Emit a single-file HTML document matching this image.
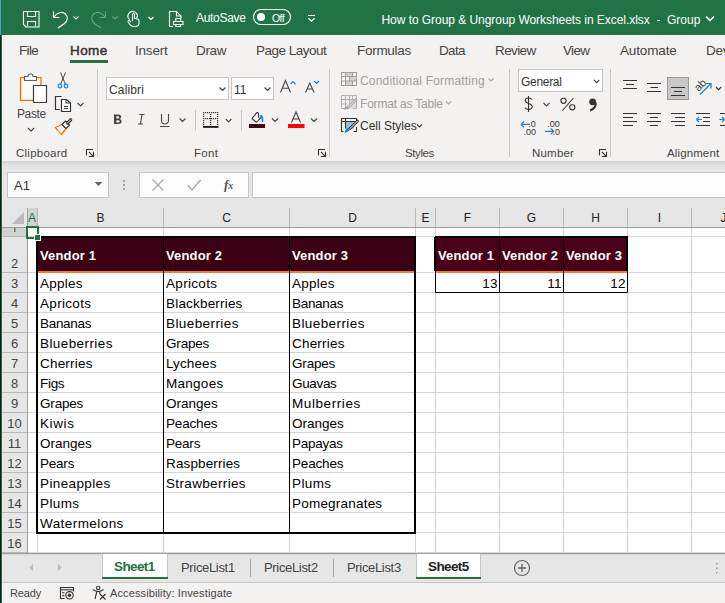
<!DOCTYPE html>
<html><head><meta charset="utf-8">
<style>
*{margin:0;padding:0;box-sizing:border-box}
html,body{width:725px;height:603px;overflow:hidden;background:#fff;font-family:"Liberation Sans",sans-serif}
.a{position:absolute}
.t{position:absolute;white-space:nowrap;line-height:1}
#title{left:0;top:0;width:725px;height:35px;background:#217346}
#tabs{left:0;top:35px;width:725px;height:31px;background:#f3f2f1}
#ribbon{left:0;top:66px;width:725px;height:95px;background:#f3f2f1}
#fbar{left:0;top:161px;width:725px;height:47px;background:#e6e6e6}
#grid{left:0;top:208px;width:725px;height:346px;background:#fff}
#sheets{left:0;top:554px;width:725px;height:29px;background:#e6e6e6}
#status{left:0;top:583px;width:725px;height:20px;background:#f3f2f1}
.tab{font-size:13.5px;color:#444;top:43.5px}
.sep{position:absolute;width:1px;background:#c8c6c4}
.glabel{font-size:11.5px;color:#444;top:147.5px}
</style></head><body>
<div id="title" class="a"></div>
<div id="tabs" class="a"></div>
<div id="ribbon" class="a"></div>
<div id="fbar" class="a"></div>
<div id="grid" class="a"></div>
<div id="sheets" class="a"></div>
<div id="status" class="a"></div>
<!-- left window border -->


<!-- TITLE BAR -->
<svg class="a" style="left:0;top:0" width="725" height="35" viewBox="0 0 725 35">
 <g fill="none" stroke="#fff" stroke-width="1.1">
  <!-- save -->
  <path d="M23.5 11.5h15.5v15.5h-13l-2.5-2.5z"/>
  <path d="M27.5 11.5v5h8v-5"/>
  <path d="M27.5 26.5v-5h8v5"/>
  <!-- undo -->
  <path d="M53.5 11.5v6h6"/>
  <path d="M54 17C56.5 12.5 62 11 65.5 14C68.5 17 67.5 21 64.5 23.5L58 28"/>
  <path d="M73.5 16.5l2.5 2.5 2.5-2.5"/>
  <!-- touch -->
  <path d="M129.5 19.5A4.6 4.6 0 1 1 136.8 18"/>
  <path d="M132.5 21v-6.5a1 1 0 0 1 2 0V19 M134.5 18.5h1.5a1 1 0 0 1 1 1 M137 19.5a1.2 1.2 0 0 1 2 .8v2.7c0 2.2-1.6 3.5-3.6 3.5h-2.2c-1.4 0-2.3-.7-3.2-1.8l-1.8-2.7a1 1 0 0 1 1.6-1.2l1.2 1.2"/>
  <path d="M148.5 17l2.5 2.5 2.5-2.5"/>
  <!-- print preview -->
  <path d="M173 26.5h-3.5v-15h7l4.5 4.5v2.5"/>
  <path d="M176.5 11.5v4.5h4.5"/>
  <path d="M175.8 21v-2.5h4.8V21 M173.5 21.5h9.5v3h-9.5z M175.8 24.5v2h4.8v-2"/>
  <!-- toggle -->
  <rect x="253.5" y="9.5" width="37" height="15" rx="7.5"/>
  <path d="M308 15.5h7 M308.3 18.2l3.2 3 3.2-3" stroke-width="1.2"/>
  <path d="M706 16.5l4 4 4-4" stroke-width="1.6"/>
 </g>
 <g fill="none" stroke="#6aa384" stroke-width="1.1">
  <g transform="translate(159,0) scale(-1,1)"><path d="M53.5 11.5v6h6"/>
  <path d="M54 17C56.5 12.5 62 11 65.5 14C68.5 17 67.5 21 64.5 23.5L58 28"/></g>
  <path d="M112.5 16.5l2.5 2.5 2.5-2.5"/>
 </g>
 <circle cx="261" cy="17" r="4" fill="#fff"/>
</svg>
<div class="t" style="left:196px;top:12px;font-size:12px;color:#fff;letter-spacing:-0.3px">AutoSave</div>
<div class="t" style="left:272px;top:13px;font-size:10.5px;color:#fff;letter-spacing:-0.6px">Off</div>
<div class="t" style="left:381.5px;top:14px;font-size:12px;color:#fff;letter-spacing:-0.05px">How to Group &amp; Ungroup Worksheets in Excel.xlsx</div>
<div class="a" style="left:657px;top:20px;width:3px;height:1px;background:#fff"></div>
<div class="t" style="left:667px;top:14px;font-size:12px;color:#fff">Group</div>
<!-- TABS -->
<div class="t tab" style="left:19px;letter-spacing:-0.67px">File</div>
<div class="t tab" style="left:70px;letter-spacing:0.4px;color:#323130;-webkit-text-stroke:0.45px #323130">Home</div>
<div class="a" style="left:70px;top:60px;width:38px;height:3px;background:#217346"></div>
<div class="t tab" style="left:135px;letter-spacing:-0.2px">Insert</div>
<div class="t tab" style="left:196px;letter-spacing:-0.33px">Draw</div>
<div class="t tab" style="left:256px;letter-spacing:-0.5px">Page Layout</div>
<div class="t tab" style="left:357px;letter-spacing:-0.29px">Formulas</div>
<div class="t tab" style="left:439px;letter-spacing:-0.67px">Data</div>
<div class="t tab" style="left:495px;letter-spacing:-0.6px">Review</div>
<div class="t tab" style="left:563px;letter-spacing:-0.67px">View</div>
<div class="t tab" style="left:620px;letter-spacing:-0.14px">Automate</div>
<div class="t tab" style="left:706px;letter-spacing:-0.3px">Developer</div>

<!-- RIBBON group separators & labels -->
<div class="sep" style="left:97px;top:69px;height:88px"></div>
<div class="sep" style="left:329px;top:69px;height:88px"></div>
<div class="sep" style="left:509px;top:69px;height:88px"></div>
<div class="sep" style="left:610px;top:69px;height:88px"></div>
<div class="t glabel" style="left:16px;letter-spacing:0.25px">Clipboard</div>
<div class="t glabel" style="left:194px;letter-spacing:0.33px">Font</div>
<div class="t glabel" style="left:405px;letter-spacing:-0.4px">Styles</div>
<div class="t glabel" style="left:532px;letter-spacing:0.2px">Number</div>
<div class="t glabel" style="left:667px;letter-spacing:0.12px">Alignment</div>
<div class="a" style="left:0;top:161px;width:725px;height:1px;background:#d2d0ce"></div>

<!-- CLIPBOARD -->
<svg class="a" style="left:0;top:66px" width="97" height="95" viewBox="0 66 97 95">
 <path d="M20.5 77.5h20.5v23h-20.5z" fill="#fde7b8" stroke="#d67410" stroke-width="1.2"/>
 <path d="M22.5 79.5h17v19h-17z" fill="#fbfbfb"/>
 <path d="M24.5 80.5v-4h3.5a2.5 2.5 0 0 1 5 0h3.5v4z" fill="#fff" stroke="#5f5f5f" stroke-width="1.1"/>
 <path d="M33.5 85.5h13v17h-13z" fill="#fff" stroke="#3b3b3b" stroke-width="1.2"/>
 <path d="M28 128l3 3 3-3" fill="none" stroke="#444" stroke-width="1.1"/>
 <!-- scissors -->
 <path d="M60.5 72.5l5 12 M65.5 72.5l-5 12" stroke="#444" stroke-width="1" fill="none"/>
 <circle cx="60" cy="86" r="1.8" fill="none" stroke="#1c7fd0" stroke-width="1.2"/>
 <circle cx="66" cy="86" r="1.8" fill="none" stroke="#1c7fd0" stroke-width="1.2"/>
 <!-- copy -->
 <path d="M59.8 109.5h-4.3v-13h6" fill="none" stroke="#333" stroke-width="1.2"/>
 <path d="M61.5 99.5h5l4 3.5v8.5h-9z" fill="#fff" stroke="#333" stroke-width="1.2"/>
 <path d="M66 99.5v3.5h4.5" fill="none" stroke="#333" stroke-width="1.1"/>
 <path d="M64 106.5h4 M64 108.5h4" stroke="#333" stroke-width="1"/>
 <path d="M77.5 103l3 3 3-3" fill="none" stroke="#444" stroke-width="1.1"/>
 <!-- format painter -->
 <path d="M62 124.5l4 4-4.5 6-6-7z" fill="#fff" stroke="#e07b10" stroke-width="1.3" stroke-linejoin="round"/>
 <path d="M58.5 130l3 3" stroke="#fcd89a" stroke-width="1.5"/>
 <path d="M62 124.5l3.5-3.5 4 4-3.5 3.5z" fill="#fff" stroke="#333" stroke-width="1.2"/>
 <path d="M67.5 123l3.2-3.2" stroke="#333" stroke-width="3.2" stroke-linecap="round"/>
 <path d="M67.5 123l3.2-3.2" stroke="#fff" stroke-width="1" stroke-linecap="round"/>
 <!-- launcher -->
 <path d="M86.5 155.5v-6h6.5 M89.0 152l4.3 4.3 M93.5 151.8v4.7h-4.7" fill="none" stroke="#333" stroke-width="1.1"/>
</svg>
<div class="t" style="left:17px;top:108px;font-size:12px;color:#444;letter-spacing:-0.4px">Paste</div>

<!-- FONT GROUP -->
<div class="a" style="left:106px;top:77px;width:123px;height:23px;background:#fff;border:1px solid #c8c6c4"></div>
<div class="a" style="left:231px;top:77px;width:43px;height:23px;background:#fff;border:1px solid #c8c6c4"></div>
<div class="t" style="left:109px;top:83.5px;font-size:12px;color:#333;letter-spacing:0.15px">Calibri</div>
<div class="t" style="left:234px;top:83.5px;font-size:12px;color:#333;letter-spacing:0px">11</div>
<svg class="a" style="left:97px;top:66px" width="234" height="95" viewBox="97 66 234 95">
 <g fill="none" stroke="#444" stroke-width="1.2">
  <path d="M219.5 87.5l3 3 3-3 M264.5 87.5l3 3 3-3"/>
  <path d="M179.5 118.5l3 3 3-3 M225.8 119l2.8 2.8 2.8-2.8 M272 118.5l3 3 3-3 M311 118.5l3 3 3-3"/>
 </g>
 <g fill="none" stroke="#1c7fd0" stroke-width="1.2">
  <path d="M290.5 84l2.5-2.5 2.5 2.5"/>
  <path d="M314 81l2.5 2.5 2.5-2.5"/>
 </g>
 <!-- B I U -->
 <path d="M114 114.5h4.2c2 0 3 1 3 2.3 0 1.2-.8 1.9-1.8 2.1 1.3.2 2.2 1 2.2 2.4 0 1.6-1.2 2.6-3.2 2.6H114z M116.3 116.3v2.2h1.6c.9 0 1.3-.4 1.3-1.1s-.4-1.1-1.3-1.1z M116.3 120.2v2.4h1.8c1 0 1.5-.4 1.5-1.2s-.5-1.2-1.5-1.2z" fill="#444" fill-rule="evenodd"/>
 <path d="M139.5 114.5h5 M138 124h5 M142 114.5l-1.5 9.5" fill="none" stroke="#444" stroke-width="1.1"/>
 <path d="M161.5 114v6.5a3.5 3.5 0 0 0 7 0V114 M160 126.5h9.5" fill="none" stroke="#444" stroke-width="1.1"/>
 <!-- separators -->
 <path d="M195.5 110v20.5 M241.5 110v20.5" stroke="#c8c6c4" stroke-width="1"/>
 <!-- borders icon -->
 <g fill="#333"><rect x="203" y="112" width="1.2" height="1.2"/><rect x="203" y="114" width="1.2" height="1.2"/><rect x="203" y="116" width="1.2" height="1.2"/><rect x="203" y="118" width="1.2" height="1.2"/><rect x="203" y="120" width="1.2" height="1.2"/><rect x="203" y="122" width="1.2" height="1.2"/><rect x="203" y="124" width="1.2" height="1.2"/><rect x="205" y="112" width="1.2" height="1.2"/><rect x="205" y="118" width="1.2" height="1.2"/><rect x="207" y="112" width="1.2" height="1.2"/><rect x="207" y="118" width="1.2" height="1.2"/><rect x="209" y="112" width="1.2" height="1.2"/><rect x="209" y="118" width="1.2" height="1.2"/><rect x="210" y="114" width="1.2" height="1.2"/><rect x="210" y="116" width="1.2" height="1.2"/><rect x="210" y="118" width="1.2" height="1.2"/><rect x="210" y="120" width="1.2" height="1.2"/><rect x="210" y="122" width="1.2" height="1.2"/><rect x="210" y="124" width="1.2" height="1.2"/><rect x="211" y="112" width="1.2" height="1.2"/><rect x="211" y="118" width="1.2" height="1.2"/><rect x="213" y="112" width="1.2" height="1.2"/><rect x="213" y="118" width="1.2" height="1.2"/><rect x="215" y="112" width="1.2" height="1.2"/><rect x="215" y="118" width="1.2" height="1.2"/><rect x="217" y="112" width="1.2" height="1.2"/><rect x="217" y="114" width="1.2" height="1.2"/><rect x="217" y="116" width="1.2" height="1.2"/><rect x="217" y="118" width="1.2" height="1.2"/><rect x="217" y="120" width="1.2" height="1.2"/><rect x="217" y="122" width="1.2" height="1.2"/><rect x="217" y="124" width="1.2" height="1.2"/></g>
 <rect x="203" y="126" width="15.5" height="1.8" fill="#111"/>
 <!-- fill -->
 <path d="M256.5 122.5L252 118.5L256.3 113.2C256.9 112.4 258.2 112.4 258.4 113.5L258.6 117.6 M256.5 122.5L261.2 117.2" fill="#fafafa" stroke="#333" stroke-width="1.1" stroke-linejoin="round"/>
 <path d="M260.2 115.6c1.6 .2 2.6 2.4 2.2 6.2" fill="none" stroke="#1c7fd0" stroke-width="1.7"/>
 <rect x="249" y="124" width="16" height="4" fill="#4a0018"/>
 <!-- font color -->
 <path d="M291.5 122.5l4.5-10.5 4.5 10.5 M293 119h6" fill="none" stroke="#444" stroke-width="1.1"/>
 <rect x="288" y="124" width="16.5" height="4" fill="#f00"/>
 <!-- launcher -->
 <path d="M318.5 155.5v-6h6.5 M321.0 152l4.3 4.3 M325.5 151.8v4.7h-4.7" fill="none" stroke="#333" stroke-width="1.1"/>
</svg>


<svg class="a" style="left:270px;top:70px" width="60" height="30" viewBox="270 70 60 30">
 <path d="M280.5 92.5l5-12 5 12 M282.3 88.3h6.4" fill="none" stroke="#444" stroke-width="1.1"/>
 <path d="M305.5 92.5l4.3-9.5 4.3 9.5 M307 89h5.6" fill="none" stroke="#444" stroke-width="1.1"/>
</svg>
<!-- STYLES GROUP -->
<svg class="a" style="left:330px;top:66px" width="395" height="95" viewBox="330 66 395 95">
 <!-- CF icon -->
 <g fill="#d2d0ce"><rect x="345.5" y="73" width="7" height="3.5"/><rect x="349.5" y="76.5" width="7" height="4.5"/><rect x="345.5" y="81" width="7" height="4"/></g>
 <g fill="none" stroke="#a19f9d" stroke-width="1">
  <rect x="341.5" y="72.5" width="15" height="13"/>
  <path d="M341.5 76.5h15 M341.5 81h15 M345.5 72.5v13 M352.5 72.5v4 M349.5 76.5v4.5 M352.5 81v4.5"/>
 </g>
 <!-- FaT icon -->
 <rect x="349.5" y="99.5" width="7" height="9" fill="#dcdad8"/>
 <g fill="none" stroke="#b3b1af" stroke-width="1">
  <path d="M353 108.5h3.5v-13h-15v13h5 M341.5 99.5h15 M341.5 104h6 M345.5 95.5v13 M349.5 95.5v9 M352.5 95.5v4"/>
 </g>
 <path d="M347.5 108l8.5-8.5" stroke="#a19f9d" stroke-width="2.6" stroke-linecap="round"/>
 <path d="M347.5 108l8.5-8.5" stroke="#f3f2f1" stroke-width="1" stroke-linecap="round"/>
 <path d="M344.5 109.5c1-2 2-2.5 3.5-2" fill="none" stroke="#a19f9d" stroke-width="1.6"/>
 <!-- Cell styles icon -->
 <rect x="346" y="122" width="7.5" height="7" fill="#8cc0ec"/>
 <g fill="none" stroke="#333" stroke-width="1.1">
  <path d="M343.5 131.5h-2v-13h15v3 M341.5 121.5h15 M345.5 118.5v10 M356.5 127v4.5h-3"/>
 </g>
 <path d="M350 128.5l7.5-7.5" stroke="#333" stroke-width="2.8" stroke-linecap="round"/>
 <path d="M350 128.5l7.5-7.5" stroke="#fff" stroke-width="1" stroke-linecap="round"/>
 <path d="M344.5 132.8c1.5-.2 4-1 5.5-3.6l-1.8-1.6c-2 1.2-3.5 3.5-3.7 5.2z" fill="#1c7fd0"/>
 <g fill="none" stroke="#a8a6a4" stroke-width="1.1">
  <path d="M488.5 78.5l2.5 2.5 2.5-2.5 M446 101.5l2.5 2.5 2.5-2.5"/>
 </g>
 <path d="M417 124.5l2.5 2.5 2.5-2.5" fill="none" stroke="#444" stroke-width="1.1"/>

 <!-- NUMBER -->
 <rect x="518.5" y="69.5" width="84" height="22" fill="#fff" stroke="#c8c6c4"/>
 <path d="M594 80l2.6 2.6 2.6-2.6 M543.5 103l3 3 3-3" fill="none" stroke="#444" stroke-width="1.1"/>
 <path d="M599.5 155.5v-6h6.5 M602.0 152l4.3 4.3 M606.5 151.8v4.7h-4.7" fill="none" stroke="#333" stroke-width="1.1"/>

 <!-- ALIGNMENT -->
 <rect x="667.5" y="77.5" width="21" height="22" fill="#c8c8c8" stroke="#9a9a9a"/>
 <g stroke="#333" stroke-width="1.15" fill="none">
  <path d="M623 80.5h14 M626 84.5h8 M623 88.5h14"/>
  <path d="M647 83.5h14 M650.5 87.5h7.5 M647 91.5h14"/>
  <path d="M671 87.5h14 M674 91.5h8 M671 95.5h14"/>
  <path d="M623 113.5h14 M623 117.5h10 M623 121.5h14 M623 125.5h10"/>
  <path d="M647 113.5h14 M650 117.5h8 M647 121.5h14 M650 125.5h8"/>
  <path d="M671 113.5h14 M675 117.5h10 M671 121.5h14 M675 125.5h10"/>
  <path d="M696 113.5h14 M703 117.5h7 M703 121.5h7 M696 125.5h14"/>
  <path d="M720 113.5h6 M720 125.5h6"/>
  <path d="M716 87l2.6 2.6 2.6-2.6" stroke-width="1.1"/>
 </g>
 <path d="M696.5 119.5h5.5 M696.5 119.5l2.5-2.5 M696.5 119.5l2.5 2.5" fill="none" stroke="#1c7fd0" stroke-width="1.2"/>
 <path d="M719.5 119.5h5 M724.5 119.5l-2.5-2.5 M724.5 119.5l-2.5 2.5" fill="none" stroke="#1c7fd0" stroke-width="1.2"/>
 <path d="M700 94.5l10.5-10.5 M706 83.5h5v5" fill="none" stroke="#1c7fd0" stroke-width="1.2"/>
 <text x="0" y="0" font-family="Liberation Sans" font-size="11" fill="#444" transform="translate(698.5,92) rotate(-45)">ab</text>
</svg>
<div class="t" style="left:360px;top:75px;font-size:12px;color:#a19f9d;letter-spacing:0.19px">Conditional Formatting</div>
<div class="t" style="left:360px;top:98px;font-size:12px;color:#a19f9d;letter-spacing:-0.2px">Format as Table</div>
<div class="t" style="left:360px;top:120px;font-size:12px;color:#333;letter-spacing:0px">Cell Styles</div>
<div class="t" style="left:521px;top:76px;font-size:12px;color:#333;letter-spacing:-0.3px">General</div>


<svg class="a" style="left:515px;top:92px" width="90" height="46" viewBox="515 92 90 46">
 <path d="M528.5 96v16" stroke="#333" stroke-width="1.1"/>
 <path d="M531.8 99.5c-.6-1-1.8-1.5-3.3-1.5-2 0-3.3 1-3.3 2.6 0 3.6 7 2.2 7 6 0 1.8-1.5 2.9-3.6 2.9-1.7 0-3-.6-3.6-1.7" fill="none" stroke="#333" stroke-width="1.1"/>
 <circle cx="563.5" cy="100.8" r="2.6" fill="none" stroke="#333" stroke-width="1.1"/>
 <circle cx="572.3" cy="107.3" r="2.6" fill="none" stroke="#333" stroke-width="1.1"/>
 <path d="M573.5 98l-11 12.5" stroke="#333" stroke-width="1.1"/>
 <circle cx="592.6" cy="101.8" r="3.4" fill="#333"/>
 <path d="M595.6 102.5c.5 3.5-1.5 6.5-5.5 8" fill="none" stroke="#333" stroke-width="2.2"/>
 <path d="M521 124.3h9 M521 124.3l3-3 M521 124.3l3 3" fill="none" stroke="#1c7fd0" stroke-width="1.2"/>
 <path d="M545 131.4h8.8 M553.8 131.4l-3-3 M553.8 131.4l-3 3" fill="none" stroke="#1c7fd0" stroke-width="1.2"/>
 <g font-family="Liberation Sans" font-size="9" fill="#333">
  <text x="528.3" y="126.8">.0</text>
  <text x="523.5" y="135.2">.00</text>
  <text x="547.3" y="126.8">.00</text>
  <text x="552.6" y="135.2">.0</text>
 </g>
</svg>
<!-- FORMULA BAR -->
<div class="a" style="left:0;top:161px;width:725px;height:6px;background:linear-gradient(#d4d4d4,#e6e6e6)"></div>
<div class="a" style="left:7px;top:172px;width:102px;height:26px;background:#fcfcfc;border:1px solid #c6c6c6"></div>
<div class="t" style="left:14px;top:179px;font-size:13px;color:#333;letter-spacing:0px">A1</div>
<div class="a" style="left:139px;top:172px;width:110px;height:26px;background:#fcfcfc;border:1px solid #c6c6c6"></div>
<svg class="a" style="left:0;top:161px" width="725" height="47" viewBox="0 161 725 47">
 <path d="M94.5 182h8l-4 4z" fill="#666"/>
 <g fill="#a0a0a0"><rect x="123" y="180" width="2" height="2"/><rect x="123" y="184" width="2" height="2"/><rect x="123" y="188" width="2" height="2"/></g>
 <path d="M152.5 179.5l11 11 M163.5 179.5l-11 11" stroke="#a8a8a8" stroke-width="1.2"/>
 <path d="M188 185.5l4 4.5 8.5-10" fill="none" stroke="#a8a8a8" stroke-width="1.4"/>
</svg>
<div class="a" style="left:252px;top:172px;width:480px;height:26px;background:#fcfcfc;border:1px solid #c6c6c6"></div>
<div class="t" style="left:224px;top:178px;font-size:13px;font-style:italic;font-weight:bold;color:#555;font-family:'Liberation Serif'">f<span style="font-size:10px">x</span></div>

<!-- GRID -->
<div class="a" style="left:2px;top:208px;width:723px;height:19px;background:#e6e6e6"></div>
<div class="a" style="left:2px;top:208px;width:25px;height:346px;background:#e6e6e6"></div>
<svg class="a" style="left:0;top:0" width="725" height="603" viewBox="0 0 725 603">
<path d="M37.5 228V553" stroke="#d4d4d4"/>
<path d="M163.5 228V553" stroke="#d4d4d4"/>
<path d="M289.5 228V553" stroke="#d4d4d4"/>
<path d="M415.5 228V553" stroke="#d4d4d4"/>
<path d="M435.5 228V553" stroke="#d4d4d4"/>
<path d="M499.5 228V553" stroke="#d4d4d4"/>
<path d="M563.5 228V553" stroke="#d4d4d4"/>
<path d="M627.5 228V553" stroke="#d4d4d4"/>
<path d="M691.5 228V553" stroke="#d4d4d4"/>
<path d="M28 236.5H725" stroke="#d4d4d4"/>
<path d="M28 272.5H725" stroke="#d4d4d4"/>
<path d="M28 292.5H725" stroke="#d4d4d4"/>
<path d="M28 312.5H725" stroke="#d4d4d4"/>
<path d="M28 332.5H725" stroke="#d4d4d4"/>
<path d="M28 352.5H725" stroke="#d4d4d4"/>
<path d="M28 372.5H725" stroke="#d4d4d4"/>
<path d="M28 392.5H725" stroke="#d4d4d4"/>
<path d="M28 412.5H725" stroke="#d4d4d4"/>
<path d="M28 432.5H725" stroke="#d4d4d4"/>
<path d="M28 452.5H725" stroke="#d4d4d4"/>
<path d="M28 472.5H725" stroke="#d4d4d4"/>
<path d="M28 492.5H725" stroke="#d4d4d4"/>
<path d="M28 512.5H725" stroke="#d4d4d4"/>
<path d="M28 532.5H725" stroke="#d4d4d4"/>
<path d="M28 552.5H725" stroke="#d4d4d4"/>
<path d="M37.5 208V227" stroke="#b8b8b8"/>
<path d="M163.5 208V227" stroke="#b8b8b8"/>
<path d="M289.5 208V227" stroke="#b8b8b8"/>
<path d="M415.5 208V227" stroke="#b8b8b8"/>
<path d="M435.5 208V227" stroke="#b8b8b8"/>
<path d="M499.5 208V227" stroke="#b8b8b8"/>
<path d="M563.5 208V227" stroke="#b8b8b8"/>
<path d="M627.5 208V227" stroke="#b8b8b8"/>
<path d="M691.5 208V227" stroke="#b8b8b8"/>
<path d="M2 236.5H27" stroke="#b8b8b8"/>
<path d="M2 272.5H27" stroke="#b8b8b8"/>
<path d="M2 292.5H27" stroke="#b8b8b8"/>
<path d="M2 312.5H27" stroke="#b8b8b8"/>
<path d="M2 332.5H27" stroke="#b8b8b8"/>
<path d="M2 352.5H27" stroke="#b8b8b8"/>
<path d="M2 372.5H27" stroke="#b8b8b8"/>
<path d="M2 392.5H27" stroke="#b8b8b8"/>
<path d="M2 412.5H27" stroke="#b8b8b8"/>
<path d="M2 432.5H27" stroke="#b8b8b8"/>
<path d="M2 452.5H27" stroke="#b8b8b8"/>
<path d="M2 472.5H27" stroke="#b8b8b8"/>
<path d="M2 492.5H27" stroke="#b8b8b8"/>
<path d="M2 512.5H27" stroke="#b8b8b8"/>
<path d="M2 532.5H27" stroke="#b8b8b8"/>
<path d="M2 552.5H27" stroke="#b8b8b8"/>
<path d="M2 227.5H725" stroke="#9e9e9e"/>
<path d="M27.5 208V553" stroke="#9e9e9e"/>
<path d="M12 224h12v-12z" fill="#b9b9b9"/>
</svg>
<div class="a" style="left:28px;top:208px;width:9px;height:19px;background:#d2d2d2"></div>
<div class="a" style="left:2px;top:228px;width:25px;height:8px;background:#d2d2d2"></div>
<div class="t" style="left:12.0px;width:40px;text-align:center;top:212px;font-size:12px;color:#217346">A</div>
<div class="t" style="left:80.5px;width:40px;text-align:center;top:212px;font-size:12px;color:#222">B</div>
<div class="t" style="left:206.5px;width:40px;text-align:center;top:212px;font-size:12px;color:#222">C</div>
<div class="t" style="left:332.5px;width:40px;text-align:center;top:212px;font-size:12px;color:#222">D</div>
<div class="t" style="left:405.5px;width:40px;text-align:center;top:212px;font-size:12px;color:#222">E</div>
<div class="t" style="left:447.5px;width:40px;text-align:center;top:212px;font-size:12px;color:#222">F</div>
<div class="t" style="left:511.5px;width:40px;text-align:center;top:212px;font-size:12px;color:#222">G</div>
<div class="t" style="left:575.5px;width:40px;text-align:center;top:212px;font-size:12px;color:#222">H</div>
<div class="t" style="left:639.5px;width:40px;text-align:center;top:212px;font-size:12px;color:#222">I</div>
<div class="t" style="left:703.5px;width:40px;text-align:center;top:212px;font-size:12px;color:#222">J</div>
<div class="t" style="left:2px;width:25px;text-align:center;top:257px;font-size:13px;color:#444">2</div>
<div class="t" style="left:2px;width:25px;text-align:center;top:277px;font-size:13px;color:#444">3</div>
<div class="t" style="left:2px;width:25px;text-align:center;top:297px;font-size:13px;color:#444">4</div>
<div class="t" style="left:2px;width:25px;text-align:center;top:317px;font-size:13px;color:#444">5</div>
<div class="t" style="left:2px;width:25px;text-align:center;top:337px;font-size:13px;color:#444">6</div>
<div class="t" style="left:2px;width:25px;text-align:center;top:357px;font-size:13px;color:#444">7</div>
<div class="t" style="left:2px;width:25px;text-align:center;top:377px;font-size:13px;color:#444">8</div>
<div class="t" style="left:2px;width:25px;text-align:center;top:397px;font-size:13px;color:#444">9</div>
<div class="t" style="left:2px;width:25px;text-align:center;top:417px;font-size:13px;color:#444">10</div>
<div class="t" style="left:2px;width:25px;text-align:center;top:437px;font-size:13px;color:#444">11</div>
<div class="t" style="left:2px;width:25px;text-align:center;top:457px;font-size:13px;color:#444">12</div>
<div class="t" style="left:2px;width:25px;text-align:center;top:477px;font-size:13px;color:#444">13</div>
<div class="t" style="left:2px;width:25px;text-align:center;top:497px;font-size:13px;color:#444">14</div>
<div class="t" style="left:2px;width:25px;text-align:center;top:517px;font-size:13px;color:#444">15</div>
<div class="t" style="left:2px;width:25px;text-align:center;top:537px;font-size:13px;color:#444">16</div>
<div class="a" style="left:14px;top:228px;width:1px;height:4px;background:#3a7fb0"></div><div class="a" style="left:15px;top:228px;width:1px;height:4px;background:#c8a040"></div>

<!-- TABLES -->
<style>.c{position:absolute;white-space:nowrap;line-height:1;font-size:13.5px;letter-spacing:0.55px;color:#000}.h{position:absolute;white-space:nowrap;line-height:1;font-size:13px;font-weight:bold;letter-spacing:0.15px;color:#fff}</style>
<div class="a" style="left:38px;top:238px;width:377px;height:33px;background:#3b0013"></div>
<div class="a" style="left:38px;top:271px;width:377px;height:2px;background:#ed7d31"></div>
<div class="a" style="left:435px;top:238px;width:192px;height:33px;background:#4b0019"></div>
<div class="a" style="left:435px;top:271px;width:192px;height:2px;background:#ed7d31"></div>
<svg class="a" style="left:0;top:0" width="725" height="603" viewBox="0 0 725 603">
<path d="M37 237H415V533H37Z" fill="none" stroke="#000" stroke-width="2"/>
<path d="M163.5 238V532 M289.5 238V532" stroke="#000"/>
<path d="M435 237H627V271" fill="none" stroke="#000" stroke-width="2"/><path d="M435 237V271" stroke="#000" stroke-width="2"/>
<path d="M435.5 271V292.5H627.5V271" fill="none" stroke="#000"/>
<path d="M499.5 238V292 M563.5 238V292" stroke="#000"/>
</svg>
<div class="c" style="left:40px;top:277px;letter-spacing:0.22px">Apples</div>
<div class="c" style="left:40px;top:297px;letter-spacing:0.31px">Apricots</div>
<div class="c" style="left:40px;top:317px;letter-spacing:-0.3px">Bananas</div>
<div class="c" style="left:40px;top:337px;letter-spacing:0.41px">Blueberries</div>
<div class="c" style="left:40px;top:357px;letter-spacing:0.2px">Cherries</div>
<div class="c" style="left:40px;top:377px;letter-spacing:-0.3px">Figs</div>
<div class="c" style="left:40px;top:397px;letter-spacing:-0.18px">Grapes</div>
<div class="c" style="left:40px;top:417px;letter-spacing:0.62px">Kiwis</div>
<div class="c" style="left:40px;top:437px;letter-spacing:0.0px">Oranges</div>
<div class="c" style="left:40px;top:457px;letter-spacing:-0.22px">Pears</div>
<div class="c" style="left:40px;top:477px;letter-spacing:0.38px">Pineapples</div>
<div class="c" style="left:40px;top:497px;letter-spacing:0.38px">Plums</div>
<div class="c" style="left:40px;top:517px;letter-spacing:0.43px">Watermelons</div>
<div class="c" style="left:166px;top:277px;letter-spacing:0.31px">Apricots</div>
<div class="c" style="left:166px;top:297px;letter-spacing:0.19px">Blackberries</div>
<div class="c" style="left:166px;top:317px;letter-spacing:0.41px">Blueberries</div>
<div class="c" style="left:166px;top:337px;letter-spacing:-0.18px">Grapes</div>
<div class="c" style="left:166px;top:357px;letter-spacing:0.1px">Lychees</div>
<div class="c" style="left:166px;top:377px;letter-spacing:0.27px">Mangoes</div>
<div class="c" style="left:166px;top:397px;letter-spacing:0.0px">Oranges</div>
<div class="c" style="left:166px;top:417px;letter-spacing:-0.18px">Peaches</div>
<div class="c" style="left:166px;top:437px;letter-spacing:-0.22px">Pears</div>
<div class="c" style="left:166px;top:457px;letter-spacing:0.13px">Raspberries</div>
<div class="c" style="left:166px;top:477px;letter-spacing:0.35px">Strawberries</div>
<div class="c" style="left:292px;top:277px;letter-spacing:0.22px">Apples</div>
<div class="c" style="left:292px;top:297px;letter-spacing:-0.3px">Bananas</div>
<div class="c" style="left:292px;top:317px;letter-spacing:0.41px">Blueberries</div>
<div class="c" style="left:292px;top:337px;letter-spacing:0.2px">Cherries</div>
<div class="c" style="left:292px;top:357px;letter-spacing:-0.18px">Grapes</div>
<div class="c" style="left:292px;top:377px;letter-spacing:-0.34px">Guavas</div>
<div class="c" style="left:292px;top:397px;letter-spacing:0.58px">Mulberries</div>
<div class="c" style="left:292px;top:417px;letter-spacing:0.0px">Oranges</div>
<div class="c" style="left:292px;top:437px;letter-spacing:-0.25px">Papayas</div>
<div class="c" style="left:292px;top:457px;letter-spacing:-0.18px">Peaches</div>
<div class="c" style="left:292px;top:477px;letter-spacing:0.38px">Plums</div>
<div class="c" style="left:292px;top:497px;letter-spacing:0.21px">Pomegranates</div>
<div class="h" style="left:40px;top:249px">Vendor 1</div>
<div class="h" style="left:166px;top:249px">Vendor 2</div>
<div class="h" style="left:292px;top:249px">Vendor 3</div>
<div class="h" style="left:438px;top:249px">Vendor 1</div>
<div class="h" style="left:502px;top:249px">Vendor 2</div>
<div class="h" style="left:566px;top:249px">Vendor 3</div>
<div class="c" style="left:458px;width:40px;text-align:right;top:277px;letter-spacing:0.4px">13</div>
<div class="c" style="left:522px;width:40px;text-align:right;top:277px;letter-spacing:0.4px">11</div>
<div class="c" style="left:586px;width:40px;text-align:right;top:277px;letter-spacing:0.4px">12</div>
<div class="a" style="left:26px;top:226px;width:13px;height:13px;border:2px solid #1e7145"></div>
<div class="a" style="left:34px;top:234px;width:7px;height:7px;background:#1e7145;border:1px solid #fff"></div>

<!-- SHEET TABS -->
<div class="a" style="left:2px;top:553px;width:723px;height:1px;background:#a0a0a0"></div><div class="a" style="left:2px;top:554px;width:723px;height:1px;background:#d6d6d6"></div>
<div class="a" style="left:2px;top:582px;width:723px;height:1px;background:#c8c8c8"></div>
<svg class="a" style="left:0;top:553px" width="725" height="50" viewBox="0 553 725 50"><path d="M33 564v7l-4-3.5z M58 564v7l4-3.5z" fill="#bdbdbd"/><path d="M250.5 559v18 M333.5 559v18" stroke="#a8a8a8"/><circle cx="522" cy="568" r="7.5" fill="none" stroke="#666" stroke-width="1.2"/><path d="M518 568h8 M522 564v8" stroke="#666" stroke-width="1.4"/><g fill="#999"><rect x="716" y="563" width="1.5" height="1.5"/><rect x="716" y="567.5" width="1.5" height="1.5"/><rect x="716" y="572" width="1.5" height="1.5"/></g></svg>
<div class="a" style="left:102px;top:554px;width:66px;height:25px;background:#fff;border-left:1px solid #c6c6c6;border-right:1px solid #c6c6c6"></div>
<div class="a" style="left:102px;top:577px;width:66px;height:2px;background:#217346"></div>
<div class="a" style="left:416px;top:554px;width:65px;height:25px;background:#fff;border-left:1px solid #c6c6c6;border-right:1px solid #c6c6c6"></div>
<div class="a" style="left:416px;top:577px;width:65px;height:2px;background:#217346"></div>
<div class="t" style="left:114px;top:560px;font-size:13.5px;font-weight:bold;color:#217346;letter-spacing:-0.6px">Sheet1</div>
<div class="t" style="left:428px;top:560px;font-size:13.5px;font-weight:bold;color:#222;letter-spacing:-0.6px">Sheet5</div>
<div class="t" style="left:181px;top:561px;font-size:13px;color:#444;letter-spacing:-0.33px">PriceList1</div>
<div class="t" style="left:264px;top:561px;font-size:13px;color:#444;letter-spacing:-0.33px">PriceList2</div>
<div class="t" style="left:347px;top:561px;font-size:13px;color:#444;letter-spacing:-0.33px">PriceList3</div>

<!-- STATUS -->
<div class="t" style="left:10px;top:588px;font-size:11px;color:#444;letter-spacing:-0.12px">Ready</div>
<div class="t" style="left:110px;top:588px;font-size:11px;color:#444;letter-spacing:0.12px">Accessibility: Investigate</div>
<svg class="a" style="left:0;top:582px" width="130" height="21" viewBox="0 582 130 21">
 <g fill="none" stroke="#333" stroke-width="1.1">
  <path d="M64.5 598.5h-4v-11h13v4"/>
  <path d="M60.5 589.8h13"/>
  <path d="M62 592.8h2.5 M62 595.8h2.5"/>
  <circle cx="69.5" cy="595.3" r="3.7"/>
  <circle cx="98.2" cy="587.9" r="1.7"/>
  <path d="M93 589.5c1.5 1.3 3.5 2 5.2 2s3.7-.7 5.3-2 M96.8 591.5l-1.8 7.5 M99.8 591.5v2.5"/>
  <path d="M100 594l5.5 5.5 M105.5 594l-5.5 5.5"/>
 </g>
 <circle cx="69.5" cy="595.3" r="1.7" fill="#333"/>
</svg>
<div class="a" style="left:0;top:0;width:1px;height:35px;background:#4a9fd0"></div>
<div class="a" style="left:0;top:35px;width:1px;height:568px;background:#1a1a1a"></div>
<div class="a" style="left:1px;top:35px;width:1px;height:568px;background:#217346"></div>
</body></html>
